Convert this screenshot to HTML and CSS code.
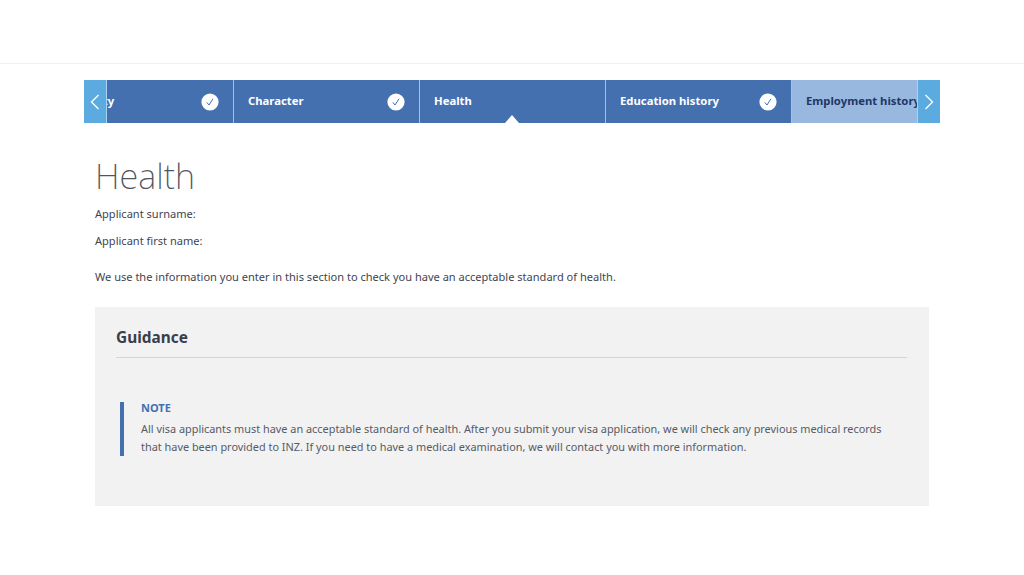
FILE: index.html
```html
<!DOCTYPE html>
<html lang="en">
<head>
<meta charset="utf-8">
<title>Health</title>
<link rel="stylesheet" href="styles.css">
</head>
<body>
<header class="topbar"></header>
<nav class="steps">
  <button class="arrow arrow-prev" aria-label="Previous"><svg width="10" height="16" viewBox="0 0 10 16"><path d="M8.5 1 L1.5 8 L8.5 15" fill="none" stroke="#fff" stroke-width="1.3"/></svg></button>
  <div class="track">
    <a class="step step-first"><span class="step-label">Identity</span><svg class="tick" width="18" height="18" viewBox="0 0 18 18"><circle cx="9" cy="9" r="8.6" fill="#fff"/><path d="M5.8 9.4 L8 12 L12 5.8" fill="none" stroke="#4470b0" stroke-width="1"/></svg></a>
    <a class="step"><span class="step-label">Character</span><svg class="tick" width="18" height="18" viewBox="0 0 18 18"><circle cx="9" cy="9" r="8.6" fill="#fff"/><path d="M5.8 9.4 L8 12 L12 5.8" fill="none" stroke="#4470b0" stroke-width="1"/></svg></a>
    <a class="step step-current"><span class="step-label">Health</span></a>
    <a class="step"><span class="step-label">Education history</span><svg class="tick" width="18" height="18" viewBox="0 0 18 18"><circle cx="9" cy="9" r="8.6" fill="#fff"/><path d="M5.8 9.4 L8 12 L12 5.8" fill="none" stroke="#4470b0" stroke-width="1"/></svg></a>
    <a class="step step-next"><span class="step-label">Employment history</span></a>
  </div>
  <button class="arrow arrow-next" aria-label="Next"><svg width="10" height="16" viewBox="0 0 10 16"><path d="M1.5 1 L8.5 8 L1.5 15" fill="none" stroke="#fff" stroke-width="1.3"/></svg></button>
</nav>
<main class="content">
  <h1 class="title">Health</h1>
  <p class="field">Applicant surname:</p>
  <p class="field">Applicant first name:</p>
  <p class="intro">We use the information you enter in this section to check you have an acceptable standard of health.</p>
  <section class="guidance">
    <h2 class="guidance-title">Guidance</h2>
    <div class="note">
      <h3 class="note-title">NOTE</h3>
      <p class="note-text">All visa applicants must have an acceptable standard of health. After you submit your visa application, we will check any previous medical records<br>that have been provided to INZ. If you need to have a medical examination, we will contact you with more information.</p>
    </div>
  </section>
</main>
</body>
</html>
```
FILE: styles.css
```css
* { box-sizing: border-box; }
html, body { margin: 0; padding: 0; }
body {
  background: #fff;
  color: #3f4450;
  font-family: "Noto Sans", "Open Sans", sans-serif;
  font-size: 11.06px;
  height: 575px;
  overflow: hidden;
}
.topbar { height: 64px; border-bottom: 1px solid #efefef; }
.steps {
  position: relative;
  height: 43px;
  margin: 16px 84px 0;
  overflow: hidden;
}
.track { display: flex; height: 43px; margin-left: -36px; }
.step {
  position: relative;
  flex: 0 0 186px;
  display: flex;
  align-items: center;
  justify-content: space-between;
  padding: 0 14px;
  background: #4470b0;
  border-right: 1px solid #a9c0de;
  color: #fff;
  font-weight: 700;
  font-size: 11.3px;
  white-space: nowrap;
}
.step-first { padding-left: 21px; }
.step-label { margin-bottom: 2px; }
.step-current::after {
  content: "";
  position: absolute;
  left: 85px;
  bottom: 0;
  border-left: 7px solid transparent;
  border-right: 7px solid transparent;
  border-bottom: 8px solid #fff;
}
.step-next { background: #98b8df; color: #1f3766; border-right: 0; overflow: hidden; }
.arrow {
  position: absolute;
  top: 0;
  width: 23px;
  height: 43px;
  padding: 0;
  border: 0;
  background: #5cabe0;
  display: flex;
  align-items: center;
  justify-content: center;
  z-index: 1;
}
.arrow-prev { left: 0; border-right: 1px solid #a9d2ee; }
.arrow-next { right: 0; border-left: 1px solid #a9d2ee; }
.content { padding: 0 95px; }
.title {
  margin: 34px 0 0;
  font-family: "Noto Sans", "Open Sans", sans-serif;
  font-weight: 200;
  font-size: 34.4px;
  line-height: 38px;
  color: #50545e;
}
.field { margin: 10px 0 0; line-height: 18px; }
.field + .field { margin-top: 9px; }
.intro { margin: 18px 0 0; line-height: 18px; }
.guidance {
  margin-top: 21px;
  height: 199px;
  background: #f2f2f3;
  padding: 20px 22px 0 21px;
}
.guidance-title {
  margin: 0;
  padding-bottom: 9px;
  border-bottom: 1px solid #d5d5d6;
  font-size: 15.4px;
  line-height: 21px;
  font-weight: 700;
  color: #3a3e4a;
}
.note {
  margin: 44px 0 0 4px;
  padding: 0 0 0 17px;
  border-left: 4px solid #4470b0;
  height: 54px;
}
.note-title { margin: 0; font-size: 11px; line-height: 12px; font-weight: 700; color: #4470b0; }
.note-text { margin: 6px 0 0; font-size: 10.9px; line-height: 18px; color: #565b66; }
```
